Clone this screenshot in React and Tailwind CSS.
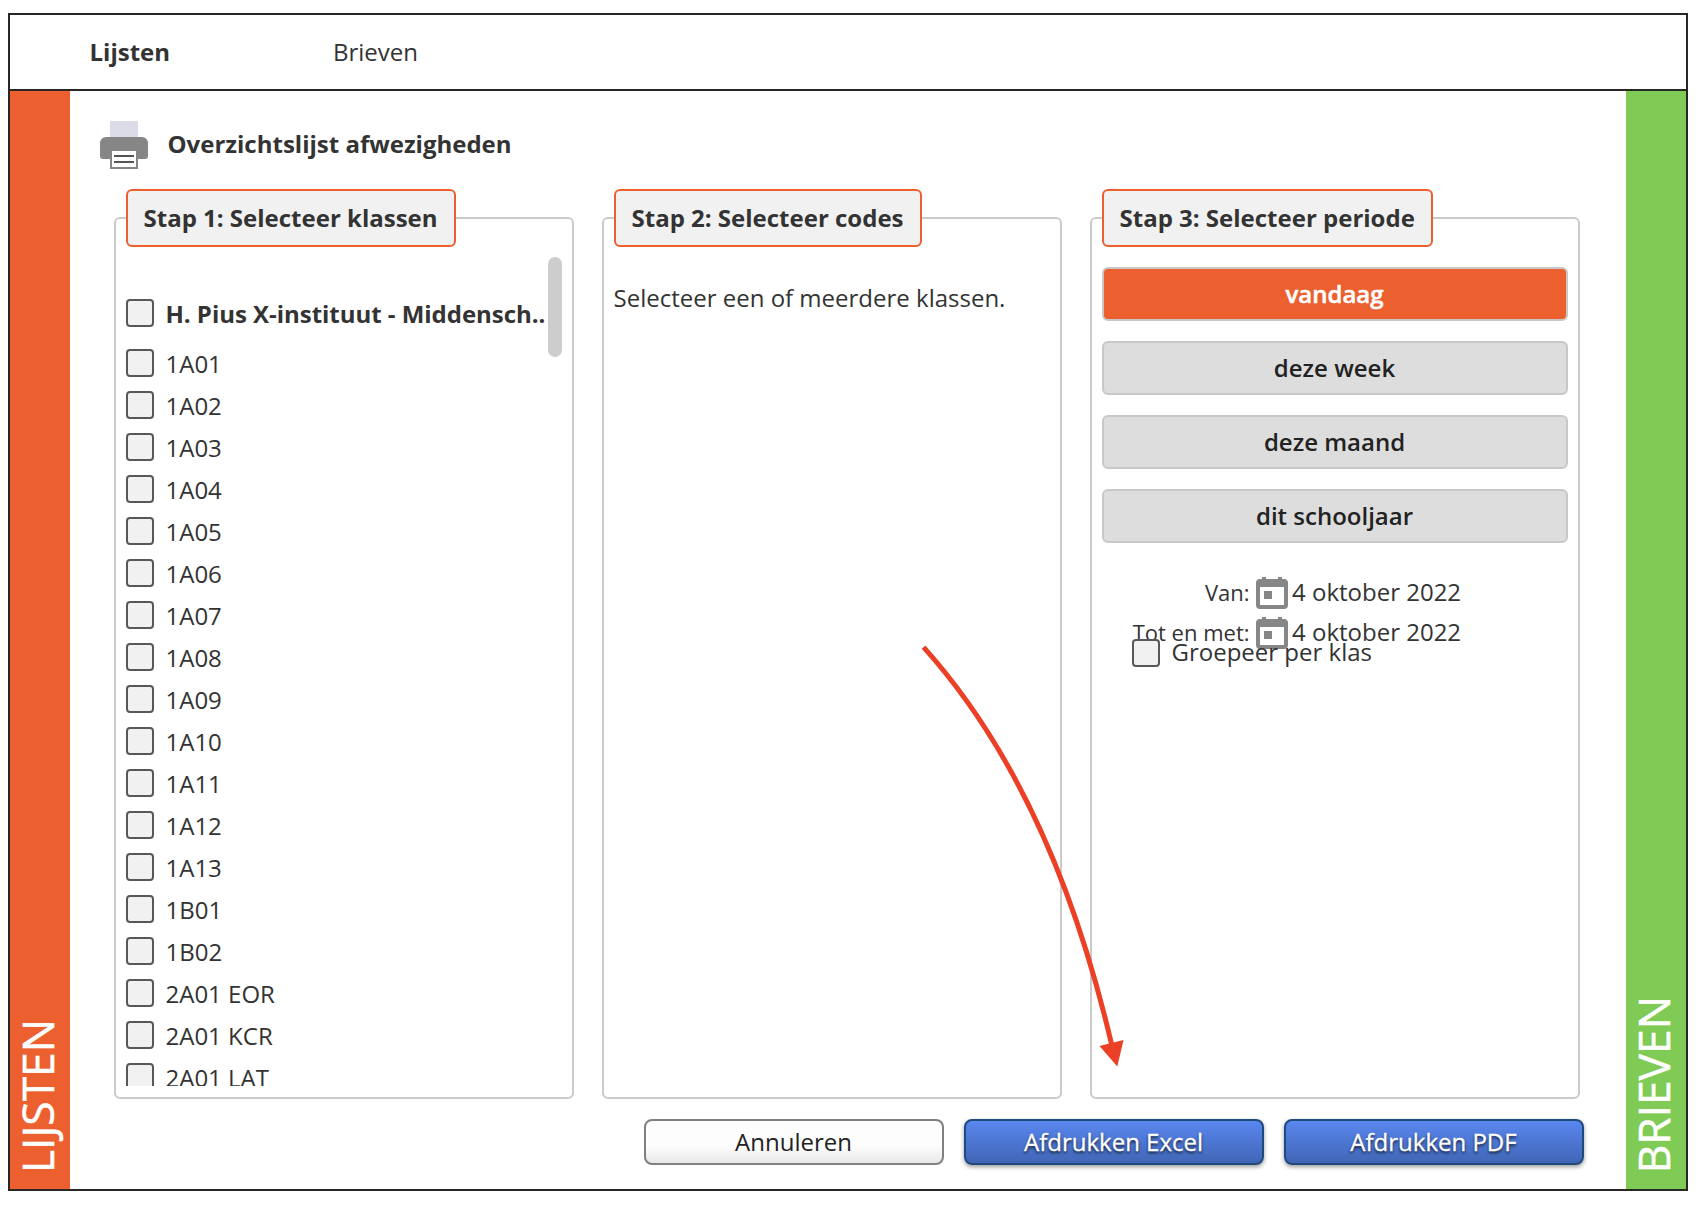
const classes = [
  "1A01", "1A02", "1A03", "1A04", "1A05", "1A06", "1A07", "1A08", "1A09", "1A10",
  "1A11", "1A12", "1A13", "1B01", "1B02", "2A01 EOR", "2A01 KCR", "2A01 LAT",
];

const periods = ["vandaag", "deze week", "deze maand", "dit schooljaar"];

function PrinterIcon() {
  return (
    <svg className="h-12 w-12 shrink-0" viewBox="0 0 48 48">
      <rect x="10" y="0" width="28" height="19" fill="#dcdce8" />
      <path fill="#868686" d="M6 16h36a6 6 0 0 1 6 6v13a3 3 0 0 1-3 3H3a3 3 0 0 1-3-3V22a6 6 0 0 1 6-6z" />
      <path fill="#868686" d="M10 30h28v18H10z" />
      <path fill="#fff" d="M12 30h24v16H12z" />
      <rect x="14" y="34" width="20" height="2" fill="#555" />
      <rect x="14" y="40" width="20" height="2" fill="#555" />
    </svg>
  );
}

function CalendarIcon() {
  return (
    <svg className="h-8 w-8 shrink-0" viewBox="0 0 32 32">
      <path
        fill="#868686"
        fillRule="evenodd"
        d="M4 2h2V0h4v2h12V0h4v2h2a4 4 0 0 1 4 4v22a4 4 0 0 1-4 4H4a4 4 0 0 1-4-4V6a4 4 0 0 1 4-4zM4 10v18h24V10z"
      />
      <rect x="8" y="14" width="8" height="8" fill="#868686" />
    </svg>
  );
}

function Checkbox() {
  return <span className="h-7 w-7 shrink-0 rounded-[4px] border-2 border-[#585858] bg-[#f1f1f1]" />;
}

function Step({ title, width, legendWidth, children }) {
  return (
    <section className={`${width} flex h-[882px] flex-col rounded-[6px] border-2 border-[#cacaca] px-[10px]`}>
      <h2
        className={`${legendWidth} -mt-[30px] flex h-[58px] shrink-0 items-center rounded-[6px] border-2 border-[#ec602f] bg-[#f1f1f1] pl-[15.5px] font-bold whitespace-nowrap`}
      >
        {title}
      </h2>
      {children}
    </section>
  );
}

function DateRow({ label, value }) {
  return (
    <div className="flex h-10 items-start">
      <span className="w-[147.5px] shrink-0 text-right text-[22px] leading-[30px]">{label}</span>
      <span className="ml-[6.5px] flex">
        <CalendarIcon />
      </span>
      <span className="ml-1 leading-[30px]">{value}</span>
    </div>
  );
}

function PrintButton({ children }) {
  return (
    <button className="h-[46px] w-[300px] rounded-[8px] border-2 border-[#1f4a7c] bg-linear-to-b from-[#5a87f0] to-[#4166b6] pr-px pb-px text-white shadow-[0_2px_4px_rgba(0,0,0,0.4)] [-webkit-text-stroke:0.3px_white] [text-shadow:0_2px_3px_rgba(0,0,0,0.8)]">
      {children}
    </button>
  );
}

export default function App() {
  return (
    <div className="relative h-[1210px] w-[1706px] overflow-hidden bg-white pt-[13px] pl-2 font-['Open_Sans',sans-serif] text-[24px] leading-8 text-[#333]">
      <div className="flex h-[1178px] w-[1680px] flex-col border-2 border-[#272727]">
        <nav className="flex h-[76px] shrink-0 items-center border-b-2 border-[#272727] pl-[79.5px]">
          <span className="w-[243.5px] font-bold">Lijsten</span>
          <span>Brieven</span>
        </nav>
        <div className="flex h-[1098px]">
          <aside className="flex w-[60px] shrink-0 items-end justify-center bg-[#ec602f] pr-1.5 pb-4 text-[44.3px] leading-[60px] text-white [-webkit-text-stroke:0.5px_white]">
            <span className="rotate-180 whitespace-nowrap [writing-mode:vertical-rl]">LIJSTEN</span>
          </aside>
          <main className="w-[1556px] shrink-0">
            <header className="mt-[30px] ml-[30px] flex h-12 items-center gap-[19.5px]">
              <PrinterIcon />
              <h1 className="-mt-[3px] font-bold">Overzichtslijst afwezigheden</h1>
            </header>
            <div className="mt-12 ml-11 flex gap-7">
              <Step title="Stap 1: Selecteer klassen" width="w-[460px]" legendWidth="w-[330px]">
                <div className="mt-[10px] flex h-[829px] w-[436px] overflow-hidden">
                  <ul className="w-[420px] shrink-0 pt-[35px]">
                    <li className="mb-2 flex h-[42px] items-center gap-[11.5px]">
                      <Checkbox />
                      <span className="w-[380.5px] shrink-0 overflow-hidden pt-0.5 font-bold tracking-[-0.03px] whitespace-nowrap">
                        H. Pius X-instituut - Middensch...
                      </span>
                    </li>
                    {classes.map((name) => (
                      <li key={name} className="flex h-[42px] items-center gap-[11.5px]">
                        <Checkbox />
                        <span className="pt-0.5">{name}</span>
                      </li>
                    ))}
                  </ul>
                  <div className="ml-[2px] h-[100px] w-[14px] shrink-0 rounded-full bg-[#cdcdcd]" />
                </div>
              </Step>
              <Step title="Stap 2: Selecteer codes" width="w-[460px]" legendWidth="w-[308px]">
                <p className="mt-[35px] -ml-[0.5px] whitespace-nowrap">Selecteer een of meerdere klassen.</p>
              </Step>
              <Step title="Stap 3: Selecteer periode" width="w-[490px]" legendWidth="w-[331px]">
                <div className="mt-5 flex flex-col gap-5">
                  {periods.map((period, i) => (
                    <button
                      key={period}
                      className={`h-[54px] rounded-[6px] border-2 border-[#c8c8c8] pr-px pb-px font-semibold ${
                        i === 0
                          ? "bg-[#ec602f] text-white [-webkit-text-stroke:0.5px_white]"
                          : "bg-[#ddd] text-[#222]"
                      }`}
                    >
                      {period}
                    </button>
                  ))}
                </div>
                <div className="mt-[34px]">
                  <DateRow label="Van:" value="4 oktober 2022" />
                  <DateRow label="Tot en met:" value="4 oktober 2022" />
                </div>
                <label className="relative -mt-[18px] ml-[30px] flex h-7 items-center gap-[11.5px]">
                  <Checkbox />
                  <span className="-mt-0.5">Groepeer per klas</span>
                </label>
              </Step>
            </div>
            <footer className="mt-5 flex gap-5 pl-[574px]">
              <button className="h-[46px] w-[300px] rounded-[8px] border-2 border-[#808080] bg-linear-to-b from-[#fdfdfd] from-60% to-[#e8e8e8] pr-px pb-px text-[#222]">
                Annuleren
              </button>
              <PrintButton>Afdrukken Excel</PrintButton>
              <PrintButton>Afdrukken PDF</PrintButton>
            </footer>
          </main>
          <aside className="flex w-[60px] shrink-0 items-end justify-center bg-[#7fcb55] pr-1.5 pb-4 text-[44.3px] leading-[60px] text-white [-webkit-text-stroke:0.5px_white]">
            <span className="rotate-180 whitespace-nowrap [writing-mode:vertical-rl]">BRIEVEN</span>
          </aside>
        </div>
      </div>
      <svg className="pointer-events-none absolute top-[630px] left-[900px] h-[450px] w-[260px]" viewBox="0 0 260 450">
        <path d="M23.5 17.2Q152 160 211.5 414" fill="none" stroke="#eb4025" strokeWidth="5" />
        <path d="M199.5 416L223.5 410L217.3 436.5z" fill="#eb4025" />
      </svg>
    </div>
  );
}
